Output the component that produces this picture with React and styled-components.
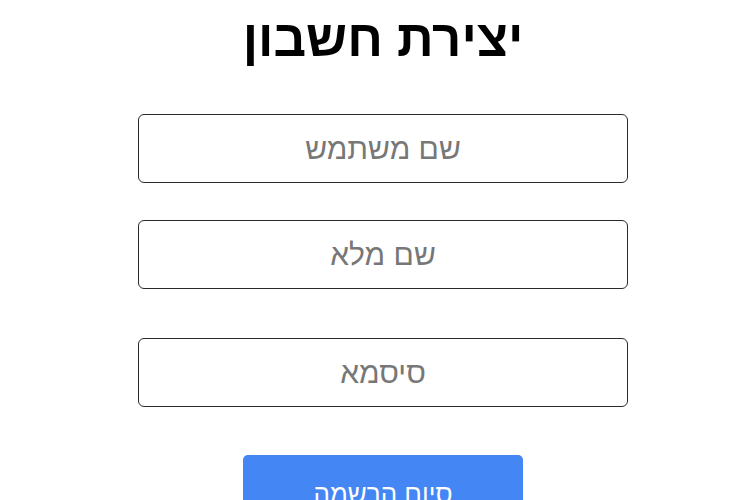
import React from 'react'
import styled, { createGlobalStyle } from 'styled-components'

const GlobalStyle = createGlobalStyle`
   body {
      margin: 0;
      background: #fff;
      font-family: "Liberation Sans", Arial, sans-serif;
   }
`

function App() {
   return (
      <>
         <GlobalStyle />
         <Page dir="rtl">
            <Title>יצירת חשבון</Title>
            <Form>
               <Input type="text" placeholder="שם משתמש" />
               <Input type="text" placeholder="שם מלא" gap={37} />
               <Input type="password" placeholder="סיסמא" gap={49} />
               <Submit type="button">סיום הרשמה</Submit>
            </Form>
         </Page>
      </>
   )
}

export default App

const Page = styled.div`
   display: flex;
   flex-direction: column;
   align-items: center;
   padding-top: 10px;
   padding-left: 16px;
`
const Title = styled.h1`
   margin: 0;
   font-size: 51px;
   font-weight: 700;
   color: #000;
   line-height: 58px;
`
const Form = styled.form`
   display: flex;
   flex-direction: column;
   align-items: center;
   margin-top: 46px;
   width: 490px;
`
const Input = styled.input`
   box-sizing: border-box;
   width: 490px;
   height: 69px;
   margin-top: ${({ gap }) => (gap ? `${gap}px` : '0')};
   border: 1px solid #2b2b2b;
   border-radius: 6px;
   background: #fff;
   font-family: "Liberation Sans", Arial, sans-serif;
   font-size: 30px;
   text-align: center;
   color: #222;
   outline: none;
   &::placeholder {
      color: #777;
   }
`
const Submit = styled.button`
   margin-top: 48px;
   width: 280px;
   height: 78px;
   border: none;
   border-radius: 5px;
   background: #4486f4;
   color: #fff;
   font-family: "Liberation Sans", Arial, sans-serif;
   font-size: 26px;
   cursor: pointer;
`
